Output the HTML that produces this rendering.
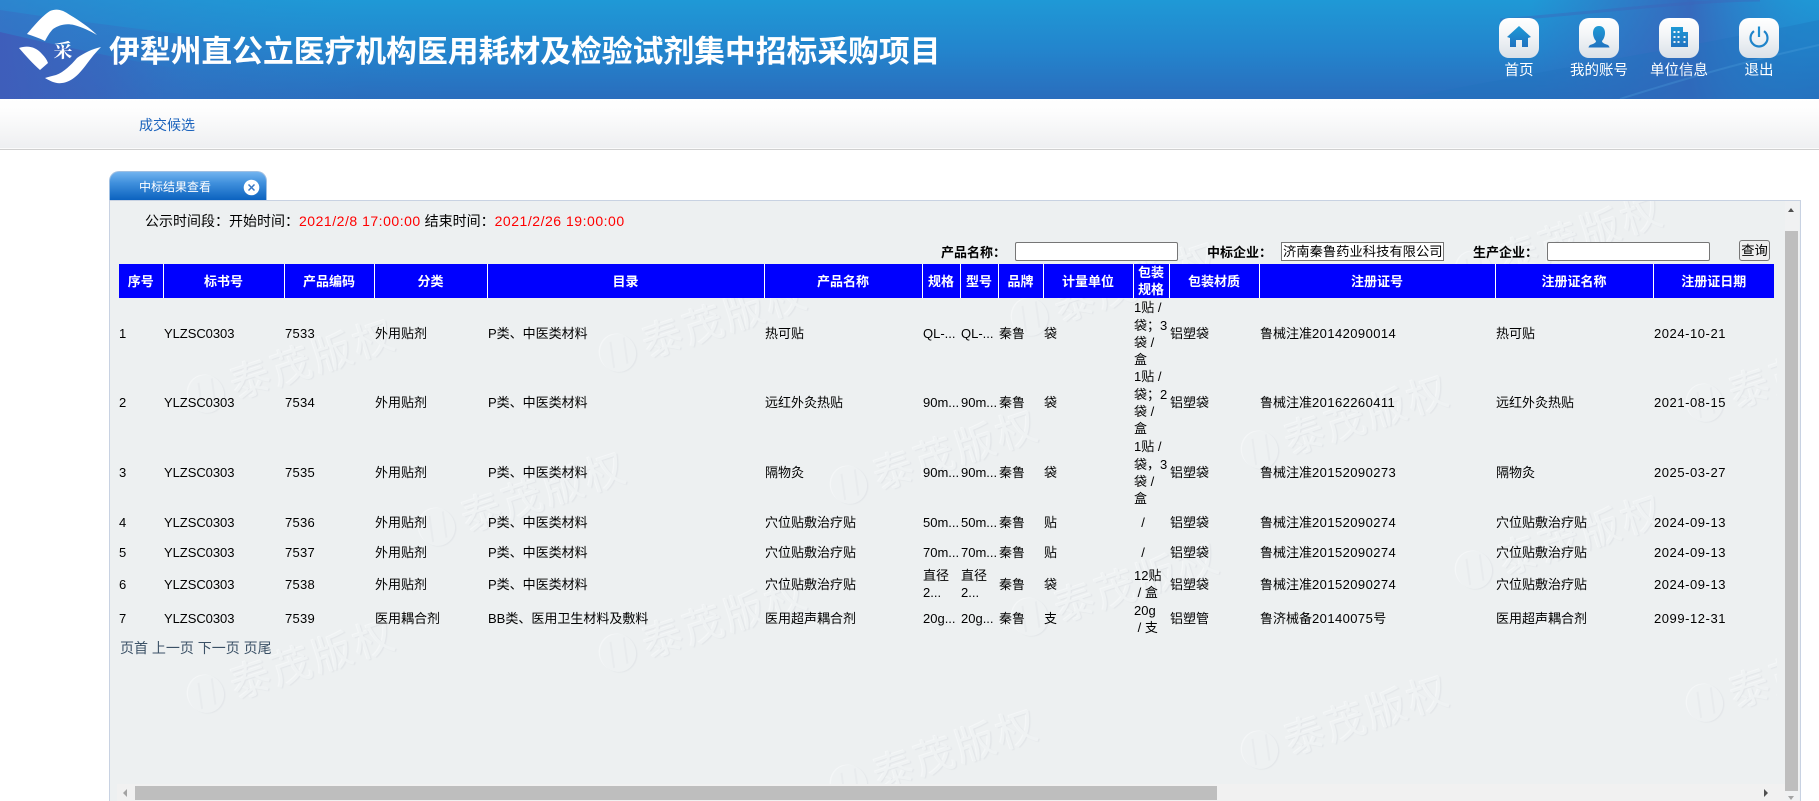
<!DOCTYPE html>
<html lang="zh-CN">
<head>
<meta charset="utf-8">
<title>中标结果查看</title>
<style>
*{box-sizing:border-box}
html,body{margin:0;padding:0;background:#fff;width:1819px;height:801px;overflow:hidden;font-family:"Liberation Sans","Noto Sans CJK SC",sans-serif;color:#000}
.abs{position:absolute}
.c{font-family:"Noto Sans CJK TC",sans-serif}
.n{letter-spacing:.42px}
#hd{position:absolute;left:0;top:0;width:1819px;height:99px;overflow:hidden;background:linear-gradient(180deg,#1f99d6 0%,#2385cd 50%,#2a6dbd 100%)}
#hd svg.bg{position:absolute;left:0;top:0}
#title{position:absolute;left:109px;top:30px;font-size:30.8px;line-height:44px;font-weight:700;color:#fff;white-space:nowrap;letter-spacing:0}
.ib{position:absolute;top:18px;width:40px;height:40px;border-radius:10px;background:linear-gradient(180deg,#fff 0%,#f4f6f8 40%,#dae1e8 100%)}
.il{position:absolute;top:61px;width:80px;text-align:center;font-size:14.5px;line-height:20px;color:#fff;white-space:nowrap}
#nav{position:absolute;left:0;top:99px;width:1819px;height:49px;background:linear-gradient(180deg,#fff 0%,#fdfdfd 25%,#eeeff1 100%)}
#navline{position:absolute;left:0;top:148px;width:1819px;height:2px;background:linear-gradient(180deg,#fbfbfb 0,#fbfbfb 50%,#cfcfcf 50%,#cfcfcf 100%)}
#nav span{position:absolute;left:139px;top:16px;font-size:14px;line-height:20px;color:#1a62bc}
#tab{position:absolute;left:109px;top:171px;width:158px;height:29px;border-radius:10px 10px 0 0;background:linear-gradient(180deg,#72b3ef 0%,#3f8fdc 40%,#0b62bf 100%);border:1px solid #9fbfe2;border-bottom:0}
#tab span{position:absolute;left:29px;top:6px;font-size:12px;line-height:18px;color:#fff;white-space:nowrap}
#panel{position:absolute;left:109px;top:200px;width:1692px;height:601px;background:#edf0f1;border:1px solid #c8d2e2;border-bottom:0;overflow:hidden}
.m{position:absolute;display:block;width:0;height:0;font-style:normal}
.m b{position:absolute;left:-18px;top:-19px;width:36px;height:38px;border-radius:50%;background:#eef1f2;box-shadow:1px 1px 1px #e3e6e9,-1px -1px 0 #f4f6f7;transform:rotate(-18deg)}
.m b::after{content:"";position:absolute;left:11px;top:6px;width:12px;height:26px;border-left:2px solid #e8ebed;border-right:2px solid #e8ebed;transform:skewX(-10deg)}
.m u{position:absolute;left:26px;top:-31px;text-decoration:none;font-size:40px;line-height:48px;letter-spacing:3px;font-weight:400;white-space:nowrap;color:#eff2f3;text-shadow:1px 1px 1px #e2e5e8,-1px -1px 0 #f4f6f7;transform-origin:0 50%;transform:rotate(-18deg)}
table{position:absolute;left:119px;top:264px;width:1655px;border-collapse:collapse;table-layout:fixed;font-size:13px;line-height:17px}
th{background:#0000ff;color:#fff;font-weight:700;height:34px;padding:0;text-align:center;border-left:1px solid #fff;vertical-align:middle;line-height:17px}
th:first-child{border-left:0}
td{padding:0 0 0 1px;vertical-align:middle;white-space:nowrap;overflow:hidden}
td:first-child{padding-left:0}
td:nth-child(15){letter-spacing:.55px}
td:nth-child(3){letter-spacing:.25px}
td:nth-child(2){letter-spacing:-.05px}
.lbl{position:absolute;top:242px;font-size:13px;line-height:19px;font-weight:700;white-space:nowrap}
.inp{position:absolute;top:242px;height:19px;background:#fff;border:1px solid #767676;border-radius:2px;font-size:13.3px;line-height:17px;padding-left:1px;white-space:nowrap;overflow:hidden}
#btn{position:absolute;left:1739px;top:240px;width:31px;height:21px;background:#efefef;border:1px solid #767676;border-radius:3px;font-size:13.3px;line-height:19px;text-align:center}
#time{position:absolute;left:145px;top:212px;font-size:14px;line-height:19px;white-space:nowrap}
#time em{font-style:normal;color:#f00;letter-spacing:.52px}
#pg{position:absolute;left:120px;top:639px;font-size:14px;line-height:19px;color:#3b5166;white-space:nowrap}
.tri{position:absolute;width:0;height:0}
</style>
</head>
<body>
<div id="hd">
<svg class="bg" width="1819" height="99" viewBox="0 0 1819 99">
<defs>
<linearGradient id="w0" x1="0" y1="0" x2="1" y2="0"><stop offset="0" stop-color="#3a70c6" stop-opacity=".5"/><stop offset="1" stop-color="#2390d2" stop-opacity="0"/></linearGradient>
<linearGradient id="w1" x1="0" y1="0" x2="1" y2="0"><stop offset="0" stop-color="#3f5dba" stop-opacity=".95"/><stop offset=".25" stop-color="#3a63bb" stop-opacity=".6"/><stop offset=".5" stop-color="#2f78c6" stop-opacity="0"/></linearGradient>
<linearGradient id="w2" x1="0" y1="0" x2="1" y2="0"><stop offset=".6" stop-color="#3a66bd" stop-opacity="0"/><stop offset=".82" stop-color="#3a62b9" stop-opacity=".85"/><stop offset="1" stop-color="#2090d3" stop-opacity=".1"/></linearGradient>
</defs>
<rect width="360" height="99" fill="url(#w0)"/>
<path d="M0 32C120 60 260 88 420 99L0 99Z" fill="url(#w1)"/>
<path d="M0 10C200 40 500 70 900 99L0 99Z" fill="url(#w1)" opacity=".35"/>
<rect x="1100" width="719" height="99" fill="url(#w2)"/>
<path d="M1819 0L1819 20C1700 45 1520 75 1400 99L1819 99Z" fill="#1f74be" opacity=".35"/>
<path d="M1500 20C1600 12 1700 0 1760 0" stroke="#3f63b8" stroke-width="3" fill="none" opacity=".4"/>
<path d="M1620 99C1680 80 1750 60 1819 45" stroke="#4fa3de" stroke-width="2" fill="none" opacity=".3"/>
<g fill="#fff">
<path d="M27 34C33 27 42 16 50 11C57 8 63 10 70 15C80 21 90 28 97 35C90 31 82 27 74 25C66 23 59 25 53 29C50 32 47 37 45 41C39 38 33 36 27 34Z"/>
<path d="M19 48C28 45 36 47 42 54C45 57 47 60 48 63L40 70C33 64 26 56 19 48Z"/>
<path d="M101 47C92 49 84 53 77 58C71 65 64 72 56 75C52 76 48 77 45 78C50 81 56 84 62 83C72 82 80 73 86 65C91 58 96 52 101 47Z"/>
<text x="63" y="57" font-size="19" font-weight="700" text-anchor="middle" font-family="'Noto Serif CJK SC','Liberation Serif',serif">采</text>
</g>
</svg>
<div id="title">伊犁州直公立医疗机构医用耗材及检验试剂集中招标采购项目</div>

<div class="ib" style="left:1499px"><svg width="40" height="40" viewBox="0 0 40 40"><defs><linearGradient id="ic" x1="0" y1="0" x2="0" y2="1"><stop offset="0" stop-color="#1e9ad6"/><stop offset="1" stop-color="#2072c0"/></linearGradient></defs><path d="M20 8L32 19L29 20L29 29L23 29L23 22L17 22L17 29L11 29L11 20L8 19Z" fill="url(#ic)"/></svg></div>
<div class="il" style="left:1479px">首页</div>

<div class="ib" style="left:1579px"><svg width="40" height="40" viewBox="0 0 40 40"><path d="M20 8C24 8 26 11 26 15C26 19 24 22 23 23C23 25 26 26 29 27C30 28 30.500 29 30.500 29.500L9.500 29.500C9.500 29 10 28 11 27C14 26 17 25 17 23C16 22 14 19 14 15C14 11 16 8 20 8Z" fill="url(#ic)"/></svg></div>
<div class="il" style="left:1559px">我的账号</div>

<div class="ib" style="left:1659px"><svg width="40" height="40" viewBox="0 0 40 40"><path fill-rule="evenodd" d="M12 9L24 9L24 14L29 14L29 29L12 29ZM14.500 13h2v2h-2zM18.500 13h2v2h-2zM14.500 18h2v2h-2zM18.500 18h2v2h-2zM24.500 18h2v2h-2zM14.500 23h2v2h-2zM18.500 23h2v2h-2zM24.500 23h2v2h-2z" fill="url(#ic)"/></svg></div>
<div class="il" style="left:1639px">单位信息</div>

<div class="ib" style="left:1739px"><svg width="40" height="40" viewBox="0 0 40 40"><path d="M15 13.100A8.500 8.500 0 1 0 25 13.100" fill="none" stroke="#1f84ca" stroke-width="2.200"/><path d="M20 8.500L20 19" stroke="#1f8ed0" stroke-width="2.200"/></svg></div>
<div class="il" style="left:1719px">退出</div>
</div>

<div id="nav"><span>成交候选</span></div>
<div id="navline"></div>

<div id="tab"><span>中标结果查看</span>
<svg style="position:absolute;left:133px;top:7px" width="17" height="17" viewBox="0 0 17 17"><circle cx="8.500" cy="8.500" r="7.800" fill="#fff"/><path d="M5.500 5.500L11.500 11.500M11.500 5.500L5.500 11.500" stroke="#3a78c4" stroke-width="1.500"/></svg>
</div>

<div id="panel">
<i class="m" style="left:96px;top:193px"><b></b><u>泰茂版权</u></i>
<i class="m" style="left:96px;top:493px"><b></b><u>泰茂版权</u></i>
<i class="m" style="left:327px;top:326px"><b></b><u>泰茂版权</u></i>
<i class="m" style="left:508px;top:152px"><b></b><u>泰茂版权</u></i>
<i class="m" style="left:508px;top:452px"><b></b><u>泰茂版权</u></i>
<i class="m" style="left:739px;top:284px"><b></b><u>泰茂版权</u></i>
<i class="m" style="left:739px;top:583px"><b></b><u>泰茂版权</u></i>
<i class="m" style="left:920px;top:116px"><b></b><u>泰茂版权</u></i>
<i class="m" style="left:920px;top:416px"><b></b><u>泰茂版权</u></i>
<i class="m" style="left:1150px;top:249px"><b></b><u>泰茂版权</u></i>
<i class="m" style="left:1150px;top:549px"><b></b><u>泰茂版权</u></i>
<i class="m" style="left:1364px;top:69px"><b></b><u>泰茂版权</u></i>
<i class="m" style="left:1364px;top:369px"><b></b><u>泰茂版权</u></i>
<i class="m" style="left:1595px;top:202px"><b></b><u>泰茂版权</u></i>
<i class="m" style="left:1595px;top:502px"><b></b><u>泰茂版权</u></i>
<div class="abs" style="left:1667px;top:0;width:24px;height:601px;background:#edf0f1"></div>
<div class="abs" style="left:7px;top:583px;width:1668px;height:18px;background:#f1f1f1"></div>
<div class="abs" style="left:25px;top:585px;width:1082px;height:14px;background:#bebebe"></div>
<div class="abs" style="left:1675px;top:0;width:14px;height:601px;background:#f0f1f2"></div>
<div class="abs" style="left:1675px;top:30px;width:13px;height:560px;background:#bebebe"></div>
<div class="tri" style="left:1678px;top:7px;border:3.500px solid transparent;border-top:0;border-bottom:4px solid #505050"></div>
<div class="tri" style="left:1678px;top:595px;border:3.500px solid transparent;border-bottom:0;border-top:4px solid #a3a3a3"></div>
<div class="tri" style="left:13px;top:588px;border:4px solid transparent;border-left:0;border-right:4px solid #a3a3a3"></div>
<div class="tri" style="left:1654px;top:588px;border:4px solid transparent;border-right:0;border-left:4px solid #505050"></div>
</div>

<div id="time">公示时间段<span class="c">：</span>开始时间<span class="c">：</span><em>2021/2/8 17:00:00</em> 结束时间<span class="c">：</span><em>2021/2/26 19:00:00</em></div>

<div class="lbl" style="left:941px">产品名称<span class="c">：</span></div>
<div class="inp" style="left:1015px;width:163px"></div>
<div class="lbl" style="left:1207px">中标企业<span class="c">：</span></div>
<div class="inp" style="left:1281px;width:163px;border-radius:0">济南秦鲁药业科技有限公司</div>
<div class="lbl" style="left:1473px">生产企业<span class="c">：</span></div>
<div class="inp" style="left:1547px;width:163px"></div>
<div id="btn">查询</div>

<table>
<colgroup><col style="width:44px"><col style="width:121px"><col style="width:90px"><col style="width:113px"><col style="width:277px"><col style="width:158px"><col style="width:38px"><col style="width:38px"><col style="width:45px"><col style="width:90px"><col style="width:36px"><col style="width:90px"><col style="width:236px"><col style="width:158px"><col style="width:121px"></colgroup>
<tr><th>序号</th><th>标书号</th><th>产品编码</th><th>分类</th><th>目录</th><th>产品名称</th><th>规格</th><th>型号</th><th>品牌</th><th>计量单位</th><th>包装<br>规格</th><th>包装材质</th><th>注册证号</th><th>注册证名称</th><th>注册证日期</th></tr>
<tr style="height:70px"><td>1</td><td>YLZSC0303</td><td>7533</td><td>外用贴剂</td><td>P类、中医类材料</td><td>热可贴</td><td>QL-...</td><td>QL-...</td><td>秦鲁</td><td>袋</td><td>1贴 /<br>袋<span class="c">；</span>3<br>袋 /<br>盒</td><td>铝塑袋</td><td>鲁械注准<span class="n">20142090014</span></td><td>热可贴</td><td>2024-10-21</td></tr>
<tr style="height:68px"><td>2</td><td>YLZSC0303</td><td>7534</td><td>外用贴剂</td><td>P类、中医类材料</td><td>远红外灸热贴</td><td>90m...</td><td>90m...</td><td>秦鲁</td><td>袋</td><td>1贴 /<br>袋<span class="c">；</span>2<br>袋 /<br>盒</td><td>铝塑袋</td><td>鲁械注准<span class="n">20162260411</span></td><td>远红外灸热贴</td><td>2021-08-15</td></tr>
<tr style="height:70px"><td>3</td><td>YLZSC0303</td><td>7535</td><td>外用贴剂</td><td>P类、中医类材料</td><td>隔物灸</td><td>90m...</td><td>90m...</td><td>秦鲁</td><td>袋</td><td>1贴 /<br>袋<span class="c">，</span>3<br>袋 /<br>盒</td><td>铝塑袋</td><td>鲁械注准<span class="n">20152090273</span></td><td>隔物灸</td><td>2025-03-27</td></tr>
<tr style="height:30px"><td>4</td><td>YLZSC0303</td><td>7536</td><td>外用贴剂</td><td>P类、中医类材料</td><td>穴位贴敷治疗贴</td><td>50m...</td><td>50m...</td><td>秦鲁</td><td>贴</td><td>&nbsp;&nbsp;/</td><td>铝塑袋</td><td>鲁械注准<span class="n">20152090274</span></td><td>穴位贴敷治疗贴</td><td>2024-09-13</td></tr>
<tr style="height:30px"><td>5</td><td>YLZSC0303</td><td>7537</td><td>外用贴剂</td><td>P类、中医类材料</td><td>穴位贴敷治疗贴</td><td>70m...</td><td>70m...</td><td>秦鲁</td><td>贴</td><td>&nbsp;&nbsp;/</td><td>铝塑袋</td><td>鲁械注准<span class="n">20152090274</span></td><td>穴位贴敷治疗贴</td><td>2024-09-13</td></tr>
<tr style="height:34px"><td>6</td><td>YLZSC0303</td><td>7538</td><td>外用贴剂</td><td>P类、中医类材料</td><td>穴位贴敷治疗贴</td><td>直径<br>2...</td><td>直径<br>2...</td><td>秦鲁</td><td>袋</td><td>12贴<br>&nbsp;/ 盒</td><td>铝塑袋</td><td>鲁械注准<span class="n">20152090274</span></td><td>穴位贴敷治疗贴</td><td>2024-09-13</td></tr>
<tr style="height:35px"><td>7</td><td>YLZSC0303</td><td>7539</td><td>医用耦合剂</td><td>BB类、医用卫生材料及敷料</td><td>医用超声耦合剂</td><td>20g...</td><td>20g...</td><td>秦鲁</td><td>支</td><td>20g<br>&nbsp;/ 支</td><td>铝塑管</td><td>鲁济械备<span class="n">20140075</span>号</td><td>医用超声耦合剂</td><td>2099-12-31</td></tr>
</table>
<div id="pg">页首 上一页 下一页 页尾</div>
</body>
</html>
